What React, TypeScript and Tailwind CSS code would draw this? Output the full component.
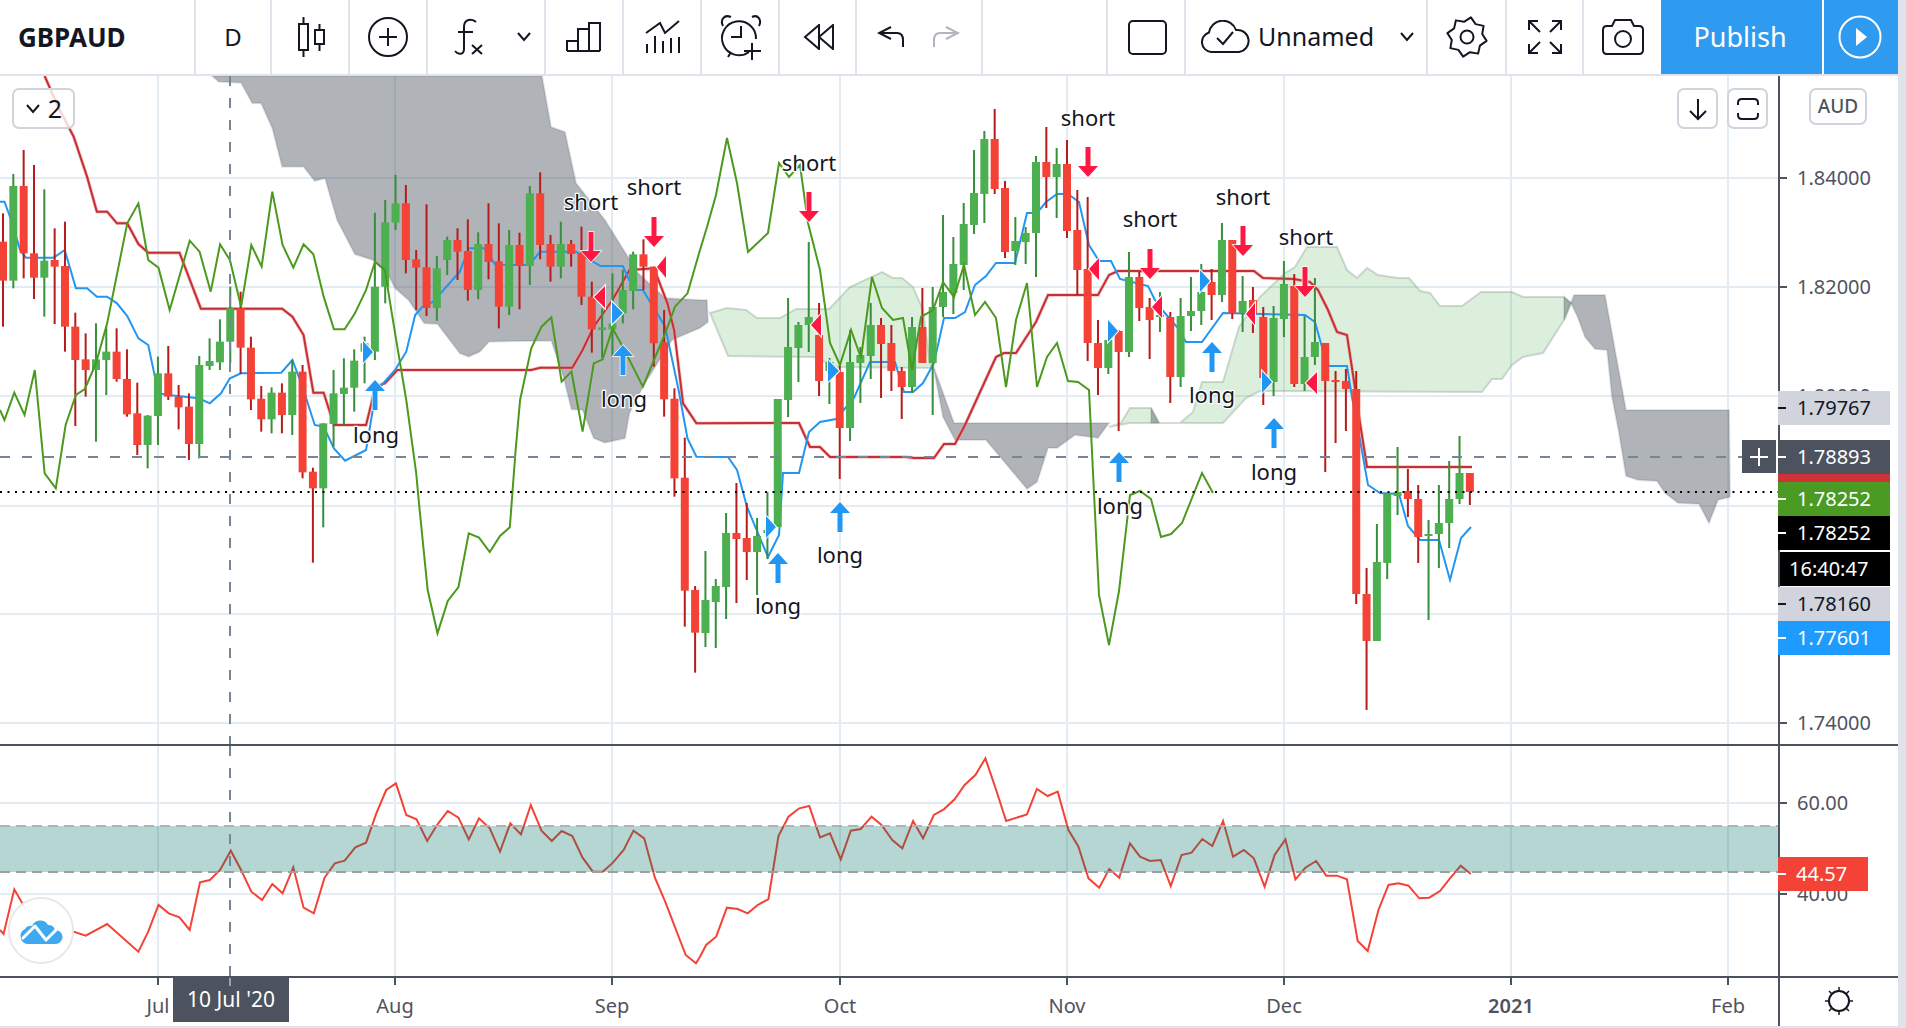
import React from "react";

type Pt = number[];
type Candle = [string, number, number, number, number];

// sampled from the chart, first stretch is measured on a 2.24x / 3x grid
const z = (pts: Pt[]): Pt[] => pts.map(([x, y]) => [x / 2.24, 70 + y / 3]);
const pl = (pts: Pt[]) => pts.map((p) => p.join(",")).join(" ");

const GRID_X = [158, 395, 612, 840, 1067, 1284, 1511, 1728];
const GRID_Y = [178, 287, 396, 506, 614, 723];

const candlesA: Candle[] = [
  ["r", 430, 515, 632, 770], ["g", 312, 348, 632, 655], ["r", 240, 348, 550, 625], ["r", 285, 550, 623, 687],
  ["g", 358, 572, 623, 740], ["r", 475, 570, 590, 762], ["r", 455, 588, 770, 845], ["r", 728, 770, 870, 1068],
  ["r", 790, 868, 900, 980], ["g", 760, 868, 900, 1115], ["g", 770, 845, 870, 975], ["r", 775, 845, 927, 935],
  ["r", 838, 927, 1033, 1040], ["r", 938, 1030, 1125, 1155], ["g", 1035, 1037, 1125, 1195], ["g", 860, 910, 1038, 1125],
  ["r", 828, 910, 980, 990], ["r", 945, 980, 1012, 1078], ["r", 970, 1010, 1122, 1170], ["g", 858, 885, 1122, 1165],
  ["g", 805, 873, 888, 900], ["g", 748, 815, 877, 900], ["g", 650, 715, 815, 880], ["r", 665, 715, 833, 912],
  ["r", 800, 833, 988, 1020], ["r", 948, 986, 1048, 1085], ["g", 952, 968, 1048, 1090], ["r", 940, 968, 1035, 1090],
  ["g", 870, 905, 1035, 1095], ["r", 885, 905, 1207, 1225], ["r", 1193, 1205, 1255, 1478], ["g", 1060, 1060, 1255, 1372],
  ["g", 900, 970, 1062, 1130], ["g", 865, 953, 972, 1065], ["g", 838, 872, 953, 1025], ["g", 800, 820, 845, 940],
  ["g", 428, 650, 845, 870], ["g", 390, 457, 650, 700], ["g", 315, 400, 458, 480], ["r", 345, 400, 570, 610],
  ["r", 540, 568, 593, 720], ["r", 403, 592, 714, 738], ["g", 558, 595, 714, 752], ["g", 500, 510, 570, 615],
  ["r", 475, 510, 545, 630], ["r", 448, 543, 660, 692], ["g", 487, 522, 660, 688], ["r", 400, 522, 576, 628],
  ["r", 460, 574, 710, 775], ["g", 480, 525, 710, 735], ["r", 488, 525, 588, 718], ["g", 348, 370, 588, 645],
  ["r", 307, 370, 525, 568], ["r", 495, 522, 590, 635], ["g", 455, 522, 590, 625], ["r", 510, 522, 552, 590],
  ["r", 470, 550, 680, 705], ["r", 635, 680, 778, 848], ["g", 715, 772, 780, 865], ["g", 610, 760, 778, 860],
  ["g", 600, 660, 730, 760], ["g", 545, 553, 663, 718], ["r", 508, 553, 590, 660], ["r", 590, 590, 820, 890],
  ["r", 720, 817, 988, 1040], ["r", 955, 986, 1225, 1280], ["r", 1103, 1223, 1562, 1670], ["r", 1548, 1560, 1688, 1808],
];

const candlesB: Candle[] = [
  ["g", 551, 600, 633, 647], ["g", 579, 586, 602, 648], ["g", 513, 533, 587, 619], ["r", 483, 533, 539, 603],
  ["r", 503, 538, 552, 580], ["g", 518, 536, 552, 595], ["g", 492, 530, 533, 559], ["g", 399, 399, 527, 527],
  ["g", 298, 347, 400, 417], ["g", 322, 325, 348, 382], ["g", 242, 317, 325, 352], ["r", 303, 335, 381, 396],
  ["g", 358, 362, 371, 404], ["r", 365, 372, 428, 479], ["g", 330, 362, 428, 441], ["g", 347, 355, 363, 403],
  ["g", 303, 325, 356, 379], ["r", 318, 325, 344, 398], ["r", 325, 343, 371, 391], ["r", 367, 371, 387, 419],
  ["g", 317, 327, 387, 393], ["r", 288, 327, 363, 363], ["g", 287, 307, 363, 415], ["g", 215, 292, 307, 317],
  ["g", 237, 264, 293, 314], ["g", 203, 224, 265, 290], ["g", 150, 193, 225, 234], ["g", 131, 139, 194, 223],
  ["r", 109, 139, 189, 194], ["r", 181, 188, 252, 258], ["g", 217, 241, 251, 265], ["g", 227, 233, 242, 264],
  ["g", 156, 162, 233, 277], ["r", 127, 162, 177, 208], ["g", 148, 164, 177, 218], ["r", 140, 164, 231, 238],
  ["r", 190, 230, 270, 295], ["r", 197, 269, 343, 361], ["r", 320, 343, 368, 395], ["g", 330, 340, 368, 374],
  ["r", 330, 331, 352, 431], ["g", 252, 277, 352, 357], ["r", 272, 277, 308, 321], ["r", 298, 307, 320, 359],
  ["g", 292, 315, 317, 332], ["r", 312, 317, 377, 403], ["g", 298, 316, 377, 387], ["g", 277, 311, 316, 331],
  ["g", 264, 292, 311, 325], ["r", 269, 282, 295, 320], ["g", 223, 240, 295, 302], ["r", 240, 240, 313, 319],
  ["g", 276, 301, 313, 332], ["r", 287, 300, 313, 333], ["r", 307, 317, 378, 405], ["g", 306, 318, 382, 396],
  ["g", 261, 284, 319, 337], ["r", 274, 286, 384, 387], ["g", 316, 357, 384, 391], ["g", 278, 342, 357, 365],
  ["r", 343, 343, 381, 472], ["r", 371, 380, 381, 443], ["r", 369, 381, 389, 431], ["r", 371, 389, 594, 604],
  ["r", 568, 594, 641, 710], ["g", 524, 562, 641, 641], ["g", 494, 494, 563, 579], ["g", 447, 492, 496, 515],
  ["r", 469, 491, 499, 517], ["r", 485, 499, 537, 563], ["g", 520, 534, 536, 620], ["g", 485, 523, 534, 568],
  ["g", 461, 499, 523, 548], ["g", 436, 473, 499, 504], ["r", 473, 473, 492, 505],
];

const candles: Candle[] = [
  ...candlesA.map(([c, a, b, d, e]): Candle => [c, 70 + a / 3, 70 + b / 3, 70 + d / 3, 70 + e / 3]),
  ...candlesB,
];

const redLine: Pt[] = [
  ...z([[100, 18], [130, 110], [165, 200], [195, 320], [217, 425], [240, 425], [262, 460], [285, 460], [310, 522], [332, 548], [402, 548], [450, 716], [632, 716], [655, 740], [680, 795], [702, 968], [725, 968], [748, 1065], [820, 1065], [832, 1000], [840, 950], [862, 940], [890, 900], [1190, 900], [1210, 893], [1282, 893], [1305, 840], [1330, 770], [1372, 690], [1410, 600], [1465, 595], [1495, 700], [1510, 780], [1530, 1000], [1560, 1060]]),
  [799, 423], [810, 447], [820, 447], [830, 457], [906, 457], [914, 458], [934, 458], [944, 444], [955, 444], [965, 425], [996, 357], [1004, 353], [1016, 353], [1036, 322], [1048, 295], [1098, 295], [1109, 275], [1118, 271], [1254, 271], [1263, 278], [1294, 279], [1310, 282], [1318, 290], [1328, 310], [1337, 332], [1347, 335], [1355, 388], [1360, 423], [1367, 467], [1472, 467],
];

const blueLine: Pt[] = [
  ...z([[0, 395], [10, 395], [25, 450], [45, 540], [58, 563], [120, 563], [145, 540], [170, 655], [195, 655], [217, 680], [240, 680], [262, 700], [285, 738], [310, 805], [332, 825], [355, 970], [377, 975], [445, 985], [470, 1000], [495, 970], [515, 925], [540, 910], [630, 908], [655, 870], [680, 960], [705, 1065], [725, 1070], [748, 1135], [773, 1172], [820, 1140], [835, 1020], [845, 960], [885, 900], [910, 845], [930, 735], [945, 712], [970, 695], [1030, 605], [1050, 535], [1085, 535], [1110, 585], [1185, 585], [1210, 545], [1290, 545], [1345, 588], [1395, 588], [1420, 660], [1440, 660], [1490, 770], [1520, 960], [1540, 1105], [1560, 1160]]),
  [728, 457], [737, 470], [747, 507], [768, 557], [779, 535], [783, 473], [799, 473], [809, 432], [820, 422], [836, 419], [854, 398], [870, 362], [895, 362], [904, 392], [913, 392], [923, 383], [934, 363], [944, 318], [955, 318], [965, 312], [975, 285], [986, 276], [996, 263], [1015, 263], [1027, 213], [1037, 213], [1046, 202], [1057, 194], [1068, 194], [1079, 202], [1089, 245], [1099, 261], [1111, 261], [1120, 279], [1148, 286], [1155, 300], [1164, 312], [1177, 327], [1186, 342], [1202, 342], [1223, 313], [1305, 315], [1315, 322], [1322, 347], [1327, 366], [1347, 366], [1352, 397], [1360, 440], [1368, 485], [1380, 493], [1399, 494], [1408, 526], [1420, 540], [1439, 540], [1450, 580], [1461, 538], [1471, 527],
];

const greenLine: Pt[] = [
  ...z([[0, 1020], [10, 1050], [32, 968], [55, 1035], [78, 900], [100, 1210], [125, 1255], [147, 1065], [170, 975], [190, 957], [215, 880], [240, 760], [285, 460], [310, 400], [332, 570], [355, 593], [380, 720], [425, 512], [447, 545], [472, 665], [493, 523], [515, 570], [540, 710], [563, 525], [586, 590], [610, 365], [633, 525], [657, 593], [680, 523], [702, 553], [725, 680], [748, 778], [772, 778], [795, 730], [820, 660], [840, 575], [862, 600], [885, 790], [910, 990], [932, 1206], [940, 1320], [958, 1560], [980, 1690], [1003, 1593], [1027, 1551], [1050, 1390], [1073, 1403], [1097, 1446], [1120, 1398], [1142, 1372], [1155, 1140], [1165, 990], [1190, 835], [1213, 770], [1235, 742], [1258, 935], [1280, 905], [1305, 1085], [1330, 880], [1350, 868], [1372, 775], [1395, 830], [1440, 950], [1465, 870], [1490, 790], [1512, 710], [1540, 670], [1568, 540]]),
  [707, 227], [716, 195], [727, 138], [737, 183], [748, 252], [768, 233], [779, 163], [789, 177], [800, 165], [808, 223], [820, 270], [830, 343], [840, 365], [851, 330], [861, 358], [872, 277], [882, 308], [893, 320], [903, 318], [912, 370], [921, 317], [933, 310], [943, 282], [954, 297], [964, 265], [975, 315], [985, 302], [996, 318], [1006, 387], [1016, 320], [1027, 283], [1037, 387], [1047, 357], [1057, 343], [1068, 381], [1078, 382], [1089, 390], [1094, 493], [1099, 595], [1109, 645], [1119, 591], [1130, 495], [1140, 491], [1151, 499], [1161, 537], [1171, 534], [1182, 523], [1192, 498], [1202, 473], [1213, 493],
];

const grayClouds: Pt[][] = [
  [
    ...z([[475, 18], [490, 35], [540, 38], [565, 100], [585, 100], [610, 175], [632, 290], [680, 290], [705, 333], [728, 325], [755, 450], [795, 553], [835, 570], [870, 615], [885, 655], [915, 690], [950, 760], [980, 762], [1030, 850], [1050, 860], [1075, 845], [1095, 815], [1235, 812], [1262, 920], [1280, 1018], [1305, 1020], [1330, 1105], [1355, 1118], [1400, 1105], [1410, 1030], [1440, 950], [1505, 810]]),
    [700, 328], [708, 322], [707, 300], [700, 300], [665, 298], [638, 273], [605, 220], [576, 183], [565, 132], [551, 127], [542, 76],
  ],
  [[933, 365], [954, 423], [1109, 423], [1098, 438], [1075, 435], [1057, 448], [1048, 448], [1037, 482], [1027, 489], [1007, 465], [986, 440], [955, 440], [943, 417]],
  [[1151, 408], [1151, 423], [1159, 423]],
  [[1564, 297], [1564, 320], [1571, 303]],
  [[1571, 303], [1574, 295], [1605, 295], [1626, 410], [1729, 410], [1730, 497], [1718, 500], [1709, 523], [1699, 504], [1678, 503], [1665, 493], [1657, 481], [1638, 480], [1626, 476], [1619, 433], [1612, 397], [1607, 350], [1595, 349], [1585, 337], [1578, 318]],
];

const greenClouds: Pt[][] = [
  [[710, 313], [727, 308], [746, 310], [757, 318], [780, 318], [796, 309], [829, 309], [850, 287], [882, 272], [893, 278], [902, 278], [913, 287], [923, 310], [930, 363], [932, 368], [837, 367], [814, 357], [728, 356]],
  [[1109, 427], [1121, 423], [1130, 408], [1151, 408], [1159, 423], [1180, 423], [1193, 412], [1202, 382], [1223, 382], [1239, 327], [1260, 297], [1285, 273], [1295, 267], [1307, 247], [1337, 247], [1347, 270], [1357, 278], [1367, 268], [1378, 275], [1398, 278], [1409, 278], [1420, 291], [1430, 293], [1440, 306], [1462, 306], [1481, 292], [1512, 292], [1523, 297], [1564, 297], [1571, 303], [1564, 320], [1543, 353], [1523, 357], [1512, 365], [1502, 379], [1492, 379], [1482, 392], [1260, 391], [1246, 398], [1223, 423], [1159, 423], [1130, 423]],
];

const shortLabels = [[591, 202], [654, 187], [809, 163], [1088, 118], [1150, 219], [1243, 197], [1306, 237]];
const longLabels = [[376, 436], [624, 400], [778, 607], [840, 556], [1120, 507], [1212, 396], [1274, 473]];
const downArrows = [[591, 232], [654, 217], [809, 192], [1088, 147], [1150, 249], [1243, 226], [1305, 267]];
const upArrows = [[375, 380], [623, 345], [778, 553], [840, 502], [1119, 452], [1212, 342], [1274, 418]];
const rightMarks = [[363, 373, 352], [612, 623, 313], [766, 776, 527], [828, 839, 371], [1108, 1118, 331], [1200, 1210, 281], [1262, 1272, 382]];
const leftMarks = [[605, 594, 297], [666, 657, 267], [821, 811, 325], [1099, 1089, 269], [1162, 1152, 307], [1255, 1246, 314], [1317, 1306, 383]];

const rsiRaw: Pt[] = [
  [0, 600], [8, 612], [32, 478], [50, 520], [165, 605], [192, 617], [240, 582], [310, 665], [332, 605], [355, 525], [378, 550], [402, 562], [425, 600], [448, 457], [470, 450], [493, 420], [517, 362], [540, 420], [563, 485], [587, 510], [610, 462], [633, 490], [657, 412], [680, 533], [703, 550], [727, 443], [750, 400], [772, 392], [796, 352], [820, 338], [843, 250], [865, 180], [887, 160], [910, 255], [933, 268], [957, 333], [980, 283], [1003, 243], [1027, 263], [1050, 328], [1073, 265], [1097, 295], [1120, 365], [1143, 280], [1167, 313], [1189, 225], [1213, 302], [1236, 333], [1258, 303], [1282, 318], [1305, 383], [1328, 425], [1350, 425], [1373, 398], [1397, 360], [1419, 302], [1443, 325], [1467, 443], [1490, 515], [1513, 595], [1536, 675], [1559, 700],
];
const rsiRaw2: Pt[] = [
  [0, 680], [8, 645], [21, 620], [35, 533], [49, 537], [62, 550], [75, 525], [89, 507], [102, 318], [115, 260], [129, 235], [142, 228], [156, 322], [169, 310], [183, 388], [196, 302], [209, 297], [223, 260], [236, 285], [250, 330], [263, 355], [277, 273], [290, 325], [304, 255], [317, 238], [331, 208], [344, 165], [358, 135], [371, 85], [385, 180], [398, 273], [425, 253], [438, 177], [452, 198], [465, 185], [479, 300], [492, 350], [505, 445], [519, 473], [532, 417], [545, 443], [559, 340], [572, 380], [585, 393], [599, 390], [612, 468], [626, 375], [639, 368], [653, 327], [666, 348], [680, 273], [693, 380], [707, 360], [720, 385], [734, 470], [747, 375], [761, 328], [774, 448], [787, 413], [801, 393], [814, 437], [828, 437], [841, 448], [855, 633], [868, 663], [882, 540], [895, 465], [908, 460], [921, 467], [935, 505], [948, 503], [962, 483], [975, 445], [989, 407], [1002, 432],
];
const rsiLine: Pt[] = [
  ...rsiRaw.map(([x, y]) => [x / 2.24, 730 + y / 3]),
  ...rsiRaw2.map(([x, y]) => [700 + x / 1.3, 730 + y / 3]),
];

const priceLabels = [
  { y: 178, text: "1.84000" },
  { y: 287, text: "1.82000" },
  { y: 396, text: "1.80000" },
  { y: 723, text: "1.74000" },
];

const flagLabels = [
  { top: 391, text: "1.79767", cls: "bg-[#d1d4dc] text-[#131722]", tick: "bg-[#131722]" },
  { top: 440, text: "1.78893", cls: "bg-[#4c525e] text-white", tick: "bg-white" },
  { top: 482, text: "1.78252", cls: "bg-[#4b9a23] text-white", tick: "bg-white" },
  { top: 516, text: "1.78252", cls: "bg-black text-white", tick: "bg-white" },
  { top: 587, text: "1.78160", cls: "bg-[#d1d4dc] text-[#131722]", tick: "bg-[#131722]" },
  { top: 621, text: "1.77601", cls: "bg-[#1e9bff] text-white", tick: "bg-white" },
];

const timeLabels = [
  { x: 158, text: "Jul" },
  { x: 395, text: "Aug" },
  { x: 612, text: "Sep" },
  { x: 840, text: "Oct" },
  { x: 1067, text: "Nov" },
  { x: 1284, text: "Dec" },
  { x: 1511, text: "2021", bold: true },
  { x: 1728, text: "Feb" },
];

const gearPoints = Array.from({ length: 16 }, (_, i) => {
  const a = ((i * 22.5 + 11.25) * Math.PI) / 180;
  const r = i % 2 === 0 ? 20 : 15.5;
  return [21 + r * Math.cos(a), 21 + r * Math.sin(a)];
});

const Cell = ({ w, children, className = "" }: { w: string; children?: React.ReactNode; className?: string }) => (
  <div className={"flex h-full shrink-0 items-center justify-center border-r-2 border-[#e0e3eb] " + w + " " + className}>{children}</div>
);

const stroke = { fill: "none", stroke: "#131722", strokeWidth: 2 };

function Toolbar() {
  return (
    <div className="flex h-[76px] shrink-0 border-b-2 border-[#e0e3eb] bg-white text-[#131722]">
      <Cell w="w-[196px]" className="!justify-start pl-[18px]">
        <span className="text-[26px] font-bold">GBPAUD</span>
      </Cell>
      <Cell w="w-[76px]"><span className="text-[24px]">D</span></Cell>
      <Cell w="w-[78px]" className="pl-[3px]">
        <svg width="28" height="42" {...stroke}>
          <rect x="1" y="8" width="9" height="26" />
          <path d="M5.5 1V8M5.5 34V41M21.5 8V14M21.5 28V35" />
          <rect x="17" y="14" width="9" height="14" />
        </svg>
      </Cell>
      <Cell w="w-[78px]">
        <svg width="42" height="42" {...stroke}>
          <circle cx="21" cy="21" r="19" />
          <path d="M21 12V30M12 21H30" />
        </svg>
      </Cell>
      <Cell w="w-[118px]" className="!justify-start gap-[32px] pl-[24px]">
        <svg width="32" height="40" {...stroke}>
          <path d="M24 5C20 1 12 2 12 10V32C12 38 6 38 3 34M6 15H21M20 28L30 37M30 28L20 37" />
        </svg>
        <svg width="16" height="10" {...stroke}><path d="M2 1L8 8L14 1" /></svg>
      </Cell>
      <Cell w="w-[78px]">
        <svg width="36" height="32" {...stroke}>
          <path d="M1 30V20H12V30M12 30V8H23V30M23 30V2H34V30M1 30H34" />
        </svg>
      </Cell>
      <Cell w="w-[78px]" className="pl-[2px]">
        <svg width="36" height="34" {...stroke}>
          <path d="M1 13L15 3L20 13L34 1" />
          <path d="M2 33V24M10 33V16M18 33V21M26 33V18M34 33V17" />
        </svg>
      </Cell>
      <Cell w="w-[78px]" className="pl-[4px]">
        <svg width="46" height="48" {...stroke}>
          <path d="M30 39A17 17 0 1 1 37 26" />
          <path d="M22 13V24H12" />
          <path d="M4 13C1 7 5 1 12 4M33 4C39 1 43 7 40 13M12 39L9 44" />
          <path d="M33 30V47M25 38H42" />
        </svg>
      </Cell>
      <Cell w="w-[77px]" className="pl-[2px]">
        <svg width="32" height="26" {...stroke}>
          <path d="M16 1L2 13L16 25ZM30 1L16 13L30 25Z" />
        </svg>
      </Cell>
      <Cell w="w-[126px]" className="!justify-start gap-[27px] pl-[20px]">
        <svg width="28" height="24" {...stroke}>
          <path d="M14 2L2 8L14 14M2 8H20Q26 8 26 15V22" />
        </svg>
        <svg width="28" height="24" {...stroke} stroke="#b2b5be">
          <path d="M14 2L26 8L14 14M26 8H8Q2 8 2 15V22" />
        </svg>
      </Cell>
      <div className="w-[125px] shrink-0 border-r-2 border-[#e0e3eb]" />
      <Cell w="w-[78px]" className="pl-[3px]">
        <svg width="40" height="35" {...stroke}><rect x="1" y="1" width="37" height="33" rx="4" /></svg>
      </Cell>
      <Cell w="w-[242px]" className="!justify-start gap-[8px] pl-[14px]">
        <svg width="50" height="34" {...stroke}>
          <path d="M11 32A10 10 0 0 1 9 12.5A14 14 0 0 1 36 10A11 11 0 0 1 39 32Z" />
          <path d="M17 18L23 24L33 12" />
        </svg>
        <span className="text-[25px]">Unnamed</span>
        <svg width="16" height="10" {...stroke} className="ml-[17px]"><path d="M2 1L8 8L14 1" /></svg>
      </Cell>
      <Cell w="w-[79px]">
        <svg width="42" height="42" {...stroke}>
          <polygon points={pl(gearPoints)} strokeLinejoin="round" />
          <circle cx="21" cy="21" r="6.5" />
        </svg>
      </Cell>
      <Cell w="w-[77px]">
        <svg width="34" height="34" {...stroke}>
          <path d="M1 10V1H10M1 1L12 12M33 10V1H24M33 1L22 12M1 24V33H10M1 33L12 22M33 24V33H24M33 33L22 22" />
        </svg>
      </Cell>
      <div className="flex h-full w-[77px] shrink-0 items-center justify-center">
        <svg width="42" height="36" {...stroke}>
          <path d="M5 7H10L13 1H29L32 7H37Q41 7 41 11V31Q41 35 37 35H5Q1 35 1 31V11Q1 7 5 7Z" />
          <circle cx="21" cy="20" r="8" />
        </svg>
      </div>
      <div className="flex h-full w-[161px] shrink-0 items-center justify-center bg-[#2f9bf0] pr-[3px] text-[27px] text-white">Publish</div>
      <div className="w-[2px] shrink-0" />
      <div className="flex h-full flex-1 items-center justify-center bg-[#2f9bf0] pr-[2px]">
        <svg width="44" height="44" fill="none" stroke="white" strokeWidth="2">
          <circle cx="22" cy="22" r="20.5" />
          <path d="M18 13L29 22L18 31Z" fill="white" stroke="none" />
        </svg>
      </div>
    </div>
  );
}

function OverlayButton({ className, children }: { className: string; children: React.ReactNode }) {
  return (
    <div className={"absolute flex h-[41px] items-center justify-center rounded-[7px] border-2 border-[#d1d4dc] bg-white/80 " + className}>
      {children}
    </div>
  );
}

function MainPane() {
  return (
    <div className="relative w-[1778px] shrink-0 overflow-hidden">
      <svg width="1778" height="668" viewBox="0 76 1778 668" className="block">
        {GRID_Y.map((y) => <line key={y} x1="0" x2="1778" y1={y} y2={y} stroke="#e3ecf2" strokeWidth="2" />)}
        {GRID_X.map((x) => <line key={x} x1={x} x2={x} y1="76" y2="744" stroke="#e3ecf2" strokeWidth="2" />)}
        {grayClouds.map((c, i) => (
          <polygon key={i} points={pl(c)} fill="#4c525e" fillOpacity="0.44" stroke="#4c525e" strokeOpacity="0.15" strokeWidth="2" />
        ))}
        {greenClouds.map((c, i) => (
          <polygon key={i} points={pl(c)} fill="#4caf50" fillOpacity="0.2" stroke="#6f8a76" strokeOpacity="0.3" strokeWidth="2" />
        ))}
        <polyline points={pl(redLine)} fill="none" stroke="#ef9a9a" strokeOpacity="0.6" strokeWidth="3.5" />
        <polyline points={pl(redLine)} fill="none" stroke="#c62f33" strokeWidth="2" />
        <polyline points={pl(blueLine)} fill="none" stroke="#2196f3" strokeWidth="2" />
        {candles.map(([c, wt, bt, bb, wb], i) => {
          const x = 3 + 10.33 * i;
          return (
            <g key={i}>
              <rect x={x - 1} y={wt} width="2" height={wb - wt} fill={c === "r" ? "#b71c1c" : "#388e3c"} />
              <rect x={x - 4} y={bt} width="8" height={Math.max(bb - bt, 2)} fill={c === "r" ? "#f44336" : "#4caf50"} />
            </g>
          );
        })}
        <polyline points={pl(greenLine)} fill="none" stroke="#4b9a1e" strokeWidth="2" />
        <line x1="0" x2="1778" y1="457" y2="457" stroke="#758696" strokeWidth="2" strokeDasharray="10 12" />
        <line x1="230" x2="230" y1="76" y2="744" stroke="#758696" strokeWidth="2" strokeDasharray="10 12" />
        <line x1="0" x2="1778" y1="492" y2="492" stroke="#000" strokeWidth="2" strokeDasharray="2 5.5" />
        {downArrows.map(([x, t]) => (
          <polygon key={x} points={pl([[x - 2.5, t], [x + 2.5, t], [x + 2.5, t + 19], [x + 10, t + 19], [x, t + 30], [x - 10, t + 19], [x - 2.5, t + 19]])} fill="#ff1744" stroke="white" strokeWidth="1.5" paintOrder="stroke" />
        ))}
        {upArrows.map(([x, t]) => (
          <polygon key={x} points={pl([[x - 2.5, t + 30], [x + 2.5, t + 30], [x + 2.5, t + 11], [x + 10, t + 11], [x, t], [x - 10, t + 11], [x - 2.5, t + 11]])} fill="#2196f3" stroke="white" strokeWidth="1.5" paintOrder="stroke" />
        ))}
        {rightMarks.map(([a, b, y]) => (
          <polygon key={a} points={pl([[a, y - 11], [b, y], [a, y + 11]])} fill="#2196f3" stroke="white" strokeWidth="2" paintOrder="stroke" />
        ))}
        {leftMarks.map(([a, b, y]) => (
          <polygon key={a} points={pl([[a, y - 11], [b, y], [a, y + 11]])} fill="#ff1744" stroke="white" strokeWidth="2" paintOrder="stroke" />
        ))}
        {shortLabels.map(([x, y]) => (
          <text key={x} x={x} y={y + 8} textAnchor="middle" fontSize="22" fill="#131722" stroke="white" strokeWidth="2.5" paintOrder="stroke">short</text>
        ))}
        {longLabels.map(([x, y]) => (
          <text key={x} x={x} y={y + 7} textAnchor="middle" fontSize="22" fill="#131722" stroke="white" strokeWidth="2.5" paintOrder="stroke">long</text>
        ))}
      </svg>
      <OverlayButton className="left-[12px] top-[12px] w-[63px] gap-[7px] text-[25px] text-[#131722]">
        <svg width="16" height="10" {...stroke}><path d="M2 1L8 8L14 1" /></svg>
        <span className="leading-none">2</span>
      </OverlayButton>
      <OverlayButton className="left-[1677px] top-[12px] w-[41px]">
        <svg width="20" height="24" {...stroke}><path d="M10 2V21M2 14L10 22L18 14" /></svg>
      </OverlayButton>
      <OverlayButton className="left-[1727px] top-[12px] w-[41px]">
        <svg width="24" height="24" {...stroke}>
          <path d="M2 8V6Q2 2 6 2H18Q22 2 22 6V8M2 16V18Q2 22 6 22H18Q22 22 22 18V16" />
        </svg>
      </OverlayButton>
      <div className="absolute left-[1742px] top-[364px] flex h-[33px] w-[34px] items-center justify-center bg-[#4c525e]">
        <svg width="20" height="20" fill="none" stroke="white" strokeWidth="2"><path d="M10 1V19M1 10H19" /></svg>
      </div>
    </div>
  );
}

function PriceAxis() {
  return (
    <div className="relative flex-1 border-l-2 border-[#4c525e] text-[20px] text-[#50535e]">
      {priceLabels.map((p) => (
        <div key={p.text} className="absolute left-0 flex h-[28px] items-center" style={{ top: p.y - 76 - 14 }}>
          <div className="h-[2px] w-[7px] bg-[#50535e]" />
          <span className="ml-[10px]">{p.text}</span>
        </div>
      ))}
      <div className="absolute left-[-2px] top-[12px] ml-[31px] flex h-[37px] w-[58px] items-center justify-center rounded-[7px] border-2 border-[#d1d4dc] text-[19px] font-medium">AUD</div>
      <div className="absolute left-[-2px] top-[397px] h-[9px] w-[112px] bg-[#d13238]" />
      {flagLabels.map((p, i) => (
        <div key={i} className={"absolute left-[-2px] flex h-[34px] w-[112px] items-center " + p.cls} style={{ top: p.top - 76 }}>
          <div className={"h-[2px] w-[8px] " + p.tick} />
          <span className="ml-[11px]">{p.text}</span>
        </div>
      ))}
      <div className="absolute left-0 top-[476px] flex h-[34px] w-[110px] items-center bg-black pl-[9px] text-white">16:40:47</div>
    </div>
  );
}

function RsiPane() {
  return (
    <div className="flex h-[232px] shrink-0 border-b-2 border-[#4c525e]">
      <div className="relative w-[1778px] shrink-0 overflow-hidden">
        <svg width="1778" height="230" viewBox="0 746 1778 230" className="block">
          <line x1="0" x2="1778" y1="803" y2="803" stroke="#e3ecf2" strokeWidth="2" />
          <line x1="0" x2="1778" y1="894" y2="894" stroke="#e3ecf2" strokeWidth="2" />
          {GRID_X.map((x) => <line key={x} x1={x} x2={x} y1="746" y2="976" stroke="#e3ecf2" strokeWidth="2" />)}
          <polyline points={pl(rsiLine)} fill="none" stroke="#f44336" strokeWidth="2" />
          <rect x="0" y="826" width="1778" height="46" fill="#007264" fillOpacity="0.29" />
          <line x1="0" x2="1778" y1="826" y2="826" stroke="#b0b3b5" strokeWidth="2" strokeDasharray="10 6" />
          <line x1="0" x2="1778" y1="872" y2="872" stroke="#98a19f" strokeWidth="2" strokeDasharray="10 6" />
          <line x1="230" x2="230" y1="746" y2="976" stroke="#758696" strokeWidth="2" strokeDasharray="10 12" />
        </svg>
        <div className="absolute left-[8px] top-[151px] flex h-[67px] w-[66px] items-center justify-center rounded-full border-2 border-[#e8e8e8] bg-white">
          <svg width="46" height="28">
            <path d="M9 27A8 8 0 0 1 7 12A7 7 0 0 1 14 9A9 9 0 0 1 30 8A7 7 0 0 1 37 13A7 7 0 0 1 38 27Z" fill="#3fa9f0" />
            <path d="M5 21L17 9L28 23L40 11" fill="none" stroke="white" strokeWidth="3" strokeLinecap="round" strokeLinejoin="round" />
          </svg>
        </div>
      </div>
      <div className="relative flex-1 border-l-2 border-[#4c525e] text-[20px] text-[#50535e]">
        <div className="absolute left-0 top-[43px] flex h-[28px] items-center">
          <div className="h-[2px] w-[7px] bg-[#50535e]" />
          <span className="ml-[10px]">60.00</span>
        </div>
        <div className="absolute left-0 top-[134px] flex h-[28px] items-center">
          <div className="h-[2px] w-[7px] bg-[#50535e]" />
          <span className="ml-[10px]">40.00</span>
        </div>
        <div className="absolute left-[-2px] top-[111px] flex h-[34px] w-[90px] items-center bg-[#f44336] text-white">
          <div className="h-[2px] w-[8px] bg-white" />
          <span className="ml-[10px]">44.57</span>
        </div>
      </div>
    </div>
  );
}

function TimeAxis() {
  return (
    <div className="flex h-[48px] shrink-0">
      <div className="relative w-[1778px] shrink-0 text-[20px] text-[#50535e]">
        {timeLabels.map((t) => (
          <React.Fragment key={t.text}>
            <div className="absolute top-0 h-[7px] w-[2px] bg-[#4c525e]" style={{ left: t.x - 1 }} />
            <span
              className={"absolute top-[14px] -translate-x-1/2 leading-[28px] " + (t.bold ? "font-semibold" : "")}
              style={{ left: t.x }}
            >
              {t.text}
            </span>
          </React.Fragment>
        ))}
        <div className="absolute left-[173px] top-[-1px] flex h-[45px] w-[116px] items-center justify-center bg-[#4c525e] text-[21px] text-white">10 Jul '20</div>
        <div className="absolute left-[229px] top-0 h-[8px] w-[2px] bg-[#9da3ad]" />
      </div>
      <div className="flex flex-1 items-center justify-center border-l-2 border-[#4c525e] pb-[2px]">
        <svg width="30" height="30" {...stroke}>
          <circle cx="15" cy="15" r="10" />
          <path d="M15 1V5M15 25V29M1 15H5M25 15H29M5 5L8 8M25 5L22 8M5 25L8 22M25 25L22 22" strokeWidth="1.5" />
        </svg>
      </div>
    </div>
  );
}

export default function App() {
  return (
    <div className="flex h-[1028px] w-[1906px] flex-col overflow-hidden bg-[#e0e3eb] pb-[2px] pr-[8px] font-['Noto_Sans',sans-serif]">
      <div className="flex flex-1 flex-col bg-white">
        <Toolbar />
        <div className="flex h-[670px] shrink-0 border-b-2 border-[#4c525e]">
          <MainPane />
          <PriceAxis />
        </div>
        <RsiPane />
        <TimeAxis />
      </div>
    </div>
  );
}
